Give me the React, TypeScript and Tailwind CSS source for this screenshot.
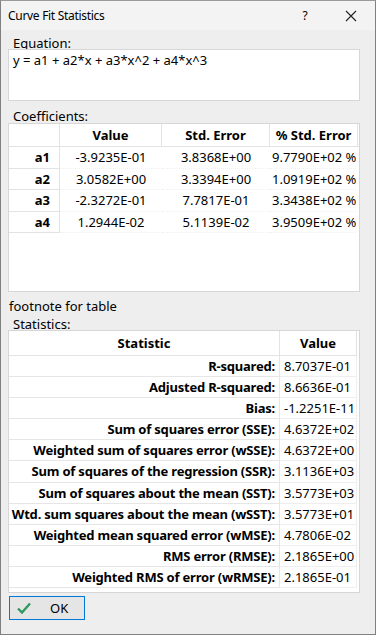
import React from "react";

const coeffs = [
  ["a1", "-3.9235E-01", "3.8368E+00", "9.7790E+02 %"],
  ["a2", "3.0582E+00", "3.3394E+00", "1.0919E+02 %"],
  ["a3", "-2.3272E-01", "7.7817E-01", "3.3438E+02 %"],
  ["a4", "1.2944E-02", "5.1139E-02", "3.9509E+02 %"],
];

const stats = [
  ["R-squared:", "8.7037E-01"],
  ["Adjusted R-squared:", "8.6636E-01"],
  ["Bias:", "-1.2251E-11"],
  ["Sum of squares error (SSE):", "4.6372E+02"],
  ["Weighted sum of squares error (wSSE):", "4.6372E+00"],
  ["Sum of squares of the regression (SSR):", "3.1136E+03"],
  ["Sum of squares about the mean (SST):", "3.5773E+03"],
  ["Wtd. sum squares about the mean (wSST):", "3.5773E+01"],
  ["Weighted mean squared error (wMSE):", "4.7806E-02"],
  ["RMS error (RMSE):", "2.1865E+00"],
  ["Weighted RMS of error (wRMSE):", "2.1865E-01"],
];

export default function App() {
  return (
    <div
      className="w-[376px] h-[635px] flex flex-col bg-[#eeeeee] border border-[#808080] border-t-[#9a9a9a] overflow-hidden text-black"
      style={{ fontFamily: '"Noto Sans", "Open Sans", sans-serif' }}
    >
      {/* Title bar */}
      <div className="h-[29px] shrink-0 bg-[#f3f3f3] flex items-center pl-[7px] text-[12px]">
        <span className="flex-1 tracking-[-0.3px]">Curve Fit Statistics</span>
        <span className="w-[12px] text-center mr-[34px] text-[12px]">?</span>
        <svg width="12" height="12" viewBox="0 0 12 12" className="mr-[18px]">
          <path d="M1 1 L11 11 M11 1 L1 11" stroke="#222" strokeWidth="1.1" />
        </svg>
      </div>

      <div className="flex flex-col pl-[7px] text-[13px]">
        {/* Equation */}
        <div className="h-[19px] pl-[5px] pt-[5px] leading-[16px]">Equation:</div>
        <div className="w-[352px] h-[52px] bg-white border border-[#d6d6d6] pl-[4px] leading-[20px] text-[13px]">
          y = a1 + a2*x + a3*x^2 + a4*x^3
        </div>

        {/* Coefficients */}
        <div className="h-[22px] pl-[5px] pt-[7px] leading-[16px]">Coefficients:</div>
        <div className="w-[352px] h-[169px] bg-white border border-[#d6d6d6] overflow-hidden">
          <div className="flex h-[23px] border-b border-[#e3e3e3] font-bold leading-[22px]">
            <div className="w-[51px] shrink-0 border-r border-[#e3e3e3]" />
            <div className="w-[102px] shrink-0 border-r border-[#e3e3e3] text-center">Value</div>
            <div className="w-[108px] shrink-0 border-r border-[#e3e3e3] text-center">Std. Error</div>
            <div className="w-[88px] shrink-0 border-r border-[#e3e3e3] text-center whitespace-nowrap">% Std. Error</div>
          </div>
          {coeffs.map((r) => (
            <div key={r[0]} className="flex h-[21.5px] leading-[20px]">
              <div className="w-[51px] shrink-0 border-r border-b border-[#e3e3e3] text-right pr-[9px] font-bold">
                {r[0]}
              </div>
              <div className="w-[102px] shrink-0 border-b border-dotted border-[#f0f0f0] text-center">{r[1]}</div>
              <div className="w-[108px] shrink-0 border-b border-dotted border-[#f0f0f0] text-center">{r[2]}</div>
              <div className="w-[86px] shrink-0 border-b border-dotted border-[#f0f0f0] whitespace-nowrap overflow-hidden pl-[2px]">
                {r[3]}
              </div>
            </div>
          ))}
        </div>

        {/* Footnote */}
        <div className="h-[22px] pl-[1px] pt-[7px] leading-[14px]">footnote for table</div>
        <div className="h-[16px] pl-[5px] pt-[2px] leading-[16px]">Statistics:</div>

        {/* Statistics */}
        <div className="w-[352px] h-[263px] bg-white border border-[#d6d6d6] overflow-hidden">
          <div className="flex h-[25px] font-bold leading-[24px]">
            <div className="w-[271px] shrink-0 border-r border-b border-[#e3e3e3] text-center">Statistic</div>
            <div className="w-[77px] shrink-0 border-r border-b border-[#e3e3e3] text-center">Value</div>
          </div>
          {stats.map((r) => (
            <div key={r[0]} className="flex h-[21.1px] leading-[20px]">
              <div className="w-[271px] shrink-0 border-r border-b border-[#e6e6e6] text-right pr-[4px] font-bold whitespace-nowrap tracking-[-0.2px]">
                {r[0]}
              </div>
              <div className="w-[77px] shrink-0 border-r border-b border-[#eeeeee] pl-[4px] whitespace-nowrap">
                {r[1]}
              </div>
            </div>
          ))}
        </div>

        {/* OK button */}
        <div className="mt-[3px] ml-[1px] w-[76px] h-[24px] border border-[#0078d7] bg-[#e5e5e5] flex items-center">
          <svg width="14" height="12" viewBox="0 0 14 12" className="ml-[7px]">
            <path d="M1 6.5 L5 10.5 L13 1.5" fill="none" stroke="#2f9a5e" strokeWidth="2.4" />
          </svg>
          <span className="ml-[19px] text-[13px] leading-[16px]">OK</span>
        </div>
      </div>
    </div>
  );
}
